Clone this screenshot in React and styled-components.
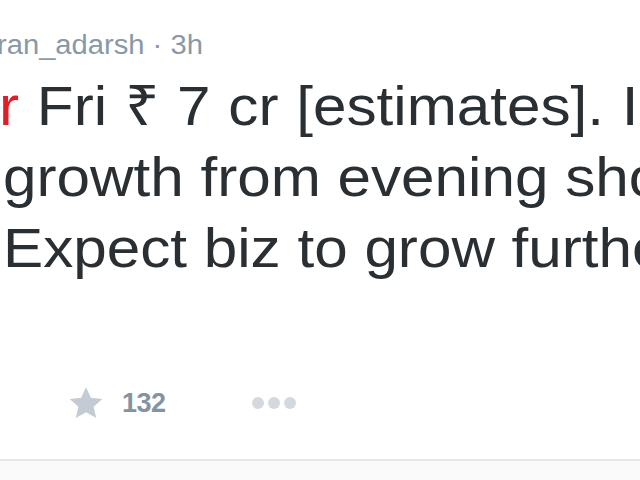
import React from "react";
import styled, { createGlobalStyle } from "styled-components";

const Global = createGlobalStyle`
  html, body {
    margin: 0;
    padding: 0;
    background: #ffffff;
  }
  body {
    font-family: "Liberation Sans", Arial, sans-serif;
  }
`;

const Tweet = styled.div`
  width: 640px;
  height: 480px;
  overflow: hidden;
  display: flex;
  flex-direction: column;
  background: #ffffff;
`;

const Meta = styled.div`
  height: 70px;
  padding-top: 27px;
  box-sizing: border-box;
  font-size: 27px;
  line-height: 36px;
  color: #8899a6;
  white-space: nowrap;
  margin-left: -3px;
  transform: scaleX(1.08);
  transform-origin: 0 0;
`;

const Body = styled.div`
  font-size: 56px;
  line-height: 71px;
  color: #292f33;
  padding-left: 3px;
`;

const Line = styled.div`
  white-space: nowrap;
  margin-left: ${({ shift }) => shift || 0}px;
  word-spacing: ${({ spread }) => spread || 0}px;
  transform: scaleX(1.075);
  transform-origin: 0 0;
`;

const Tag = styled.span`
  color: #dd1f26;
`;

const Actions = styled.div`
  display: flex;
  align-items: center;
  height: 60px;
  margin-top: 90px;
  padding-left: 68px;
`;

const Action = styled.div`
  display: flex;
  align-items: center;
  gap: 18px;
  margin-right: ${({ space }) => space || 0}px;
`;

const Count = styled.span`
  font-size: 27px;
  font-weight: bold;
  color: #8493a0;
  letter-spacing: -0.5px;
`;

const Dots = styled.div`
  display: flex;
  gap: 4px;
`;

const Dot = styled.span`
  width: 12px;
  height: 12px;
  border-radius: 50%;
  background: #d2d9df;
`;

const Divider = styled.div`
  margin-top: 26px;
  border-top: 2px solid #e4e6e8;
  flex: 1;
  background: #fafafa;
`;

const Star = () => (
  <svg width="36" height="34" viewBox="0 0 24 23" aria-hidden="true">
    <path
      d="M12 0.8l3.3 7.2 7.7.8-5.8 5.2 1.7 7.7L12 17.8l-6.9 3.9 1.7-7.7L1 8.8l7.7-.8z"
      fill="#c3ccd4"
    />
  </svg>
);

export default function App() {
  return (
    <>
      <Global />
      <Tweet>
        <Meta>ran_adarsh · 3h</Meta>
        <Body>
          <Line shift={-4} spread={1}>
            <Tag>r</Tag> Fri ₹ 7 cr [estimates]. In
          </Line>
          <Line>growth from evening sho</Line>
          <Line>Expect biz to grow furthe</Line>
        </Body>
        <Actions>
          <Action space={86}>
            <Star />
            <Count>132</Count>
          </Action>
          <Dots>
            <Dot />
            <Dot />
            <Dot />
          </Dots>
        </Actions>
        <Divider />
      </Tweet>
    </>
  );
}
